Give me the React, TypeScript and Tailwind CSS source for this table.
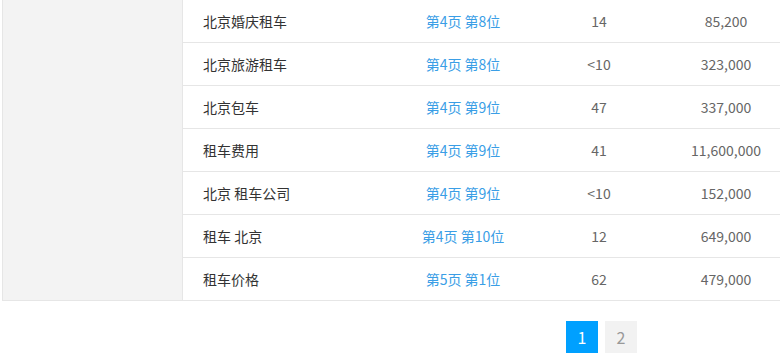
import React from "react";

const rows = [
  { keyword: "北京婚庆租车", rank: "第4页 第8位", index: "14", volume: "85,200" },
  { keyword: "北京旅游租车", rank: "第4页 第8位", index: "<10", volume: "323,000" },
  { keyword: "北京包车", rank: "第4页 第9位", index: "47", volume: "337,000" },
  { keyword: "租车费用", rank: "第4页 第9位", index: "41", volume: "11,600,000" },
  { keyword: "北京 租车公司", rank: "第4页 第9位", index: "<10", volume: "152,000" },
  { keyword: "租车 北京", rank: "第4页 第10位", index: "12", volume: "649,000" },
  { keyword: "租车价格", rank: "第5页 第1位", index: "62", volume: "479,000" },
];

export default function App() {
  return (
    <div
      className="w-[780px] h-[359px] overflow-hidden bg-white text-[14px]"
      style={{ fontFamily: '"Noto Sans CJK SC", "Noto Sans", sans-serif' }}
    >
      {/* Table */}
      <div className="ml-[2px] w-[785px] flex border-l border-b border-[#e6e6e6]">
        <div className="w-[180px] shrink-0 bg-[#f3f3f3] border-r border-[#e6e6e6]" />
        <div className="flex-1">
          {rows.map((row) => (
            <div key={row.keyword} className="flex h-[43px] items-center border-b border-[#e6e6e6] last:border-b-0 last:h-[42px]">
              <div className="w-[210px] pl-[20px] text-[#333]">{row.keyword}</div>
              <div className="w-[140px] text-center text-[#3a9ee6]">{row.rank}</div>
              <div className="w-[132px] text-center text-[#666]">{row.index}</div>
              <div className="w-[122px] text-center text-[#666]">{row.volume}</div>
            </div>
          ))}
        </div>
      </div>

      {/* Pagination */}
      <div className="flex gap-[7px] pl-[566px] pt-[20px]">
        <button className="w-[32px] h-[32px] bg-[#00a0ff] text-white text-[16px]">1</button>
        <button className="w-[32px] h-[32px] bg-[#f2f2f2] text-[#999] text-[16px]">2</button>
      </div>
    </div>
  );
}
